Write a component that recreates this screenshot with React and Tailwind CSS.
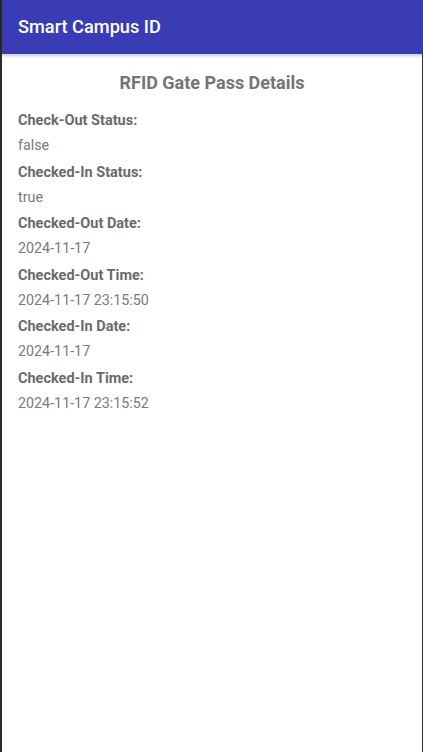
export default function App() {
  const rows = [
    ["Check-Out Status:", "false"],
    ["Checked-In Status:", "true"],
    ["Checked-Out Date:", "2024-11-17"],
    ["Checked-Out Time:", "2024-11-17 23:15:50"],
    ["Checked-In Date:", "2024-11-17"],
    ["Checked-In Time:", "2024-11-17 23:15:52"],
  ];
  return (
    <div className="w-[423px] h-[752px] bg-[#2b2b2b] pl-[2px] pr-[1px] flex flex-col" style={{ fontFamily: "Roboto, 'Noto Sans', sans-serif" }}>
      <div className="flex-1 bg-white flex flex-col">
        <div className="h-[54px] bg-[#3a3cb6] flex items-center pl-[16px] text-white text-[18.2px] font-medium shadow-[0_2px_3px_rgba(0,0,0,0.2)] relative z-10 -mr-[1px]">
          Smart Campus ID
        </div>
        <div className="px-[16px] pt-[17px]">
          <div className="text-center text-[18px] font-bold text-[#757575] leading-[24px]">RFID Gate Pass Details</div>
          <div className="mt-[14px] flex flex-col">
            {rows.map(([l, v]) => (
              <div key={l} className="flex flex-col">
                <div className="text-[14.5px] font-bold text-[#6a6a6a] leading-[24px]">{l}</div>
                <div className="text-[14.3px] text-[#7a7a7a] leading-[24px] mb-[3.6px]">{v}</div>
              </div>
            ))}
          </div>
        </div>
      </div>
    </div>
  );
}
